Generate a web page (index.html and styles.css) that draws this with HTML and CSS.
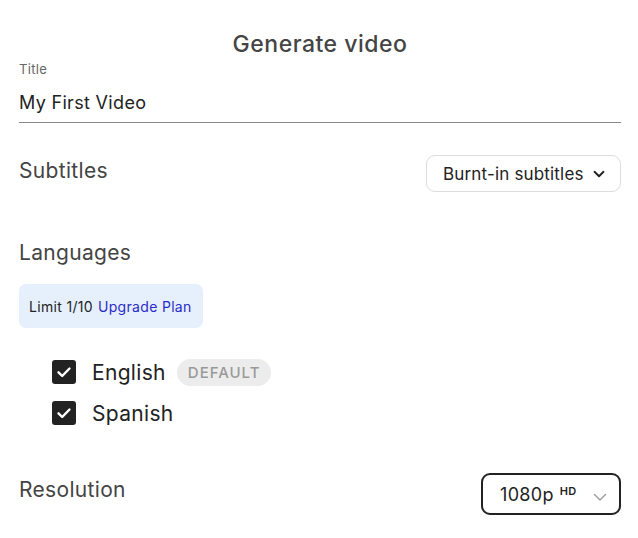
FILE: index.html
```html
<!DOCTYPE html>
<html>
<head>
<meta charset="utf-8">
<link rel="stylesheet" href="styles.css">
</head>
<body>
<div class="panel">
  <h1 class="heading">Generate video</h1>
  <div class="field">
    <label class="field-label">Title</label>
    <div class="field-input">My First Video</div>
  </div>

  <div class="row row-subtitles">
    <div class="section-title">Subtitles</div>
    <div class="select select-light">
      <span>Burnt-in subtitles</span>
      <svg class="chev-dark" width="14" height="14" viewBox="0 0 14 14"><path d="M2.5 4.8 L7 9.2 L11.5 4.8" fill="none" stroke="#222" stroke-width="1.9" stroke-linecap="round" stroke-linejoin="round"/></svg>
    </div>
  </div>

  <div class="section-title languages">Languages</div>
  <div class="limit"><span class="limit-text">Limit 1/10</span><a class="upgrade">Upgrade Plan</a></div>

  <ul class="lang-list">
    <li class="lang">
      <span class="check"><svg width="24" height="24" viewBox="0 0 24 24"><path d="M6.5 12.3 L10.2 16 L17.5 8.5" fill="none" stroke="#fff" stroke-width="2.4" stroke-linecap="round" stroke-linejoin="round"/></svg></span>
      <span class="lang-name">English</span>
      <span class="badge">DEFAULT</span>
    </li>
    <li class="lang">
      <span class="check"><svg width="24" height="24" viewBox="0 0 24 24"><path d="M6.5 12.3 L10.2 16 L17.5 8.5" fill="none" stroke="#fff" stroke-width="2.4" stroke-linecap="round" stroke-linejoin="round"/></svg></span>
      <span class="lang-name">Spanish</span>
    </li>
  </ul>

  <div class="row row-resolution">
    <div class="section-title">Resolution</div>
    <div class="select select-dark">
      <span class="res">1080p<sup class="hd">HD</sup></span>
      <svg class="chev-light" width="14" height="10" viewBox="0 0 14 10"><path d="M1.5 2.5 L7 8 L12.5 2.5" fill="none" stroke="#999" stroke-width="1.3" stroke-linecap="round" stroke-linejoin="round"/></svg>
    </div>
  </div>
</div>
</body>
</html>
```
FILE: styles.css
```css
* { box-sizing: border-box; }
html, body { margin: 0; padding: 0; background: #fff; }
body {
  font-family: Inter, "Noto Sans", "Liberation Sans", sans-serif;
  color: #222;
  letter-spacing: 0.02em;
}
.panel {
  padding: 28px 17px 0 19px;
}
.heading {
  margin: 0;
  text-align: center;
  font-size: 23px;
  font-weight: 500;
  line-height: 32px;
  letter-spacing: 0.5px;
  color: #444;
}
.field-label {
  display: block;
  font-size: 13px;
  line-height: 18px;
  color: #666;
}
.field-input {
  margin-top: 13px;
  font-size: 18px;
  line-height: 24px;
  color: #222;
  padding-bottom: 7px;
  border-bottom: 1px solid #888;
}
.row {
  display: flex;
  align-items: flex-start;
  justify-content: space-between;
}
.row-subtitles { margin-top: 32px; }
.row-subtitles .section-title { margin-top: 2px; }
.section-title {
  font-size: 21px;
  line-height: 28px;
  font-weight: 400;
  color: #444;
}
.select {
  display: flex;
  align-items: center;
}
.select-light {
  height: 37px;
  width: 195px;
  border: 1px solid #ddd;
  border-radius: 9px;
  padding: 0 14px 0 16px;
  font-size: 17px;
  letter-spacing: 0.01em;
  color: #222;
  justify-content: space-between;
}
.languages { margin-top: 47px; }
.limit {
  margin-top: 17px;
  display: flex;
  align-items: center;
  height: 44px;
  width: 184px;
  padding: 0 10px;
  background: #e6f0fd;
  border-radius: 7px;
  font-size: 14px;
}
.limit-text { color: #222; }
.upgrade { color: #2b2bc8; margin-left: 5px; }
.lang-list {
  list-style: none;
  margin: 30px 0 0 0;
  padding: 0 0 0 33px;
}
.lang {
  display: flex;
  align-items: center;
  height: 28px;
}
.lang + .lang { margin-top: 13px; }
.check {
  width: 24px;
  height: 24px;
  background: #222;
  border-radius: 3px;
  display: flex;
}
.lang-name {
  margin-left: 16px;
  font-size: 21px;
  color: #222;
}
.badge {
  margin-left: 11px;
  height: 27px;
  padding: 0 11px;
  border-radius: 14px;
  background: #ececec;
  color: #999;
  font-size: 15px;
  font-weight: 500;
  letter-spacing: 1px;
  display: flex;
  align-items: center;
}
.row-resolution { margin-top: 46px; }
.row-resolution .section-title { margin-top: 3px; }
.select-dark {
  height: 42px;
  width: 140px;
  border: 2px solid #222;
  border-radius: 9px;
  padding: 0 12px 0 17px;
  justify-content: space-between;
}
.res { font-size: 18px; color: #222; }
.hd {
  font-size: 11px;
  font-weight: 600;
  margin-left: 6px;
  vertical-align: 6px;
}
.chev-light { margin-top: 5px; }
```
